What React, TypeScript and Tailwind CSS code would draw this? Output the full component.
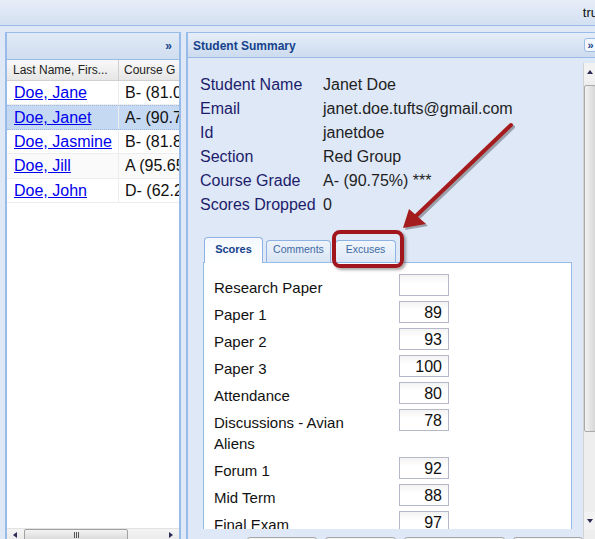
import React from "react";

const students = [
  { name: "Doe, Jane", grade: "B- (81.0", sel: false, alt: false },
  { name: "Doe, Janet", grade: "A- (90.7", sel: true, alt: false },
  { name: "Doe, Jasmine", grade: "B- (81.8", sel: false, alt: false },
  { name: "Doe, Jill", grade: "A (95.65", sel: false, alt: true },
  { name: "Doe, John", grade: "D- (62.2", sel: false, alt: false },
];

const info = [
  ["Student Name", "Janet Doe"],
  ["Email", "janet.doe.tufts@gmail.com"],
  ["Id", "janetdoe"],
  ["Section", "Red Group"],
  ["Course Grade", "A- (90.75%) ***"],
  ["Scores Dropped", "0"],
];

const scores = [
  { label: "Research Paper", value: "" },
  { label: "Paper 1", value: "89" },
  { label: "Paper 2", value: "93" },
  { label: "Paper 3", value: "100" },
  { label: "Attendance", value: "80" },
  { label: "Discussions - Avian Aliens", value: "78" },
  { label: "Forum 1", value: "92" },
  { label: "Mid Term", value: "88" },
  { label: "Final Exam", value: "97" },
];

function TriUp() {
  return <div className="w-0 h-0 border-x-[3.5px] border-x-transparent border-b-[4px] border-b-[#2b2b55]" />;
}
function TriDown() {
  return <div className="w-0 h-0 border-x-[3.5px] border-x-transparent border-t-[4px] border-t-[#2b2b55]" />;
}
function TriLeft() {
  return <div className="w-0 h-0 border-y-[3.5px] border-y-transparent border-r-[4px] border-r-[#2b2b55]" />;
}
function TriRight() {
  return <div className="w-0 h-0 border-y-[3.5px] border-y-transparent border-l-[4px] border-l-[#2b2b55]" />;
}

export default function App() {
  return (
    <div className="relative w-[595px] h-[539px] overflow-hidden bg-[#dfe8f6] font-['Liberation_Sans',Arial,sans-serif]">
      {/* top bar */}
      <div className="h-[26px] border-b border-[#99bbe8] bg-linear-to-b from-[#e7eef8] to-[#d3e0f1] flex items-center justify-end">
        <span className="text-[13px] text-[#111] mr-[-3px] whitespace-nowrap">tru</span>
      </div>

      <div className="flex gap-[5px] pl-[5px] mt-[6px]">
        {/* left panel */}
        <div className="w-[176px] h-[509px] shrink-0 flex flex-col border-x-2 border-t border-[#99bbe8] bg-white">
          <div className="h-[27px] shrink-0 flex items-center justify-end pr-[7px] bg-linear-to-b from-[#e1eaf6] to-[#d0ddef] border-b border-[#99bbe8]">
            <span className="text-[12px] font-bold text-[#15428b] leading-none">»</span>
          </div>
          <div className="h-[21px] shrink-0 flex border-b border-[#d0d0d0] bg-linear-to-b from-[#f9f9f9] to-[#e6e6e6] text-[12px] text-[#222] leading-[20px]">
            <div className="w-[112px] shrink-0 pl-[6px] border-r border-[#d0d0d0] whitespace-nowrap overflow-hidden">Last Name, Firs...</div>
            <div className="flex-1 pl-[5px] whitespace-nowrap overflow-hidden">Course G</div>
          </div>
          {students.map((s) => (
            <div
              key={s.name}
              className={
                "h-[24.4px] shrink-0 flex text-[16px] leading-[23px] " +
                (s.sel
                  ? "bg-[#c5d9f3] border-y border-dotted border-[#9fb8e0]"
                  : s.alt
                  ? "bg-[#fafafa] border-b border-[#ededed]"
                  : "bg-white border-b border-[#ededed]")
              }
            >
              <div className="w-[112px] shrink-0 pl-[7px] border-r border-[#ededed] whitespace-nowrap overflow-hidden">
                <span className="text-[#0000ee] underline">{s.name}</span>
              </div>
              <div className="flex-1 pl-[6px] whitespace-nowrap overflow-hidden text-[#111]">{s.grade}</div>
            </div>
          ))}
          <div className="flex-1" />
          <div className="h-[13px] shrink-0 flex items-center bg-linear-to-b from-[#f4f4f4] to-[#e9e9e9] border-t border-[#e2e2e2]">
            <div className="w-[16px] h-full flex items-center justify-center"><TriLeft /></div>
            <div className="ml-[1px] w-[104px] h-[12px] rounded-[2px] border border-[#a0a0a0] bg-linear-to-b from-[#f3f3f3] to-[#d9d9d9] flex items-center justify-center gap-[1px]">
              <div className="w-px h-[6px] bg-[#555]" />
              <div className="w-px h-[6px] bg-[#555]" />
              <div className="w-px h-[6px] bg-[#555]" />
            </div>
            <div className="flex-1" />
            <div className="w-[16px] h-full flex items-center justify-center"><TriRight /></div>
          </div>
        </div>

        {/* right panel */}
        <div className="w-[420px] h-[509px] shrink-0 flex flex-col border-t border-l-2 border-[#99bbe8]">
          <div className="h-[25px] shrink-0 flex items-center border-b border-[#99bbe8] bg-linear-to-b from-[#e6eef8] via-[#d9e5f4] to-[#cddbef]">
            <span className="pl-[5px] pt-[2px] text-[12px] font-bold text-[#15428b]">Student Summary</span>
            <div className="ml-auto mr-[9px] w-[13px] h-[14px] rounded-[3px] border border-[#99bbe8] bg-[#f4f8fd] flex items-center justify-center text-[11px] font-bold text-[#15428b] leading-none">
              »
            </div>
          </div>

          <div className="flex pt-[5px] h-[490px] overflow-hidden">
            {/* main content */}
            <div className="w-[395px] shrink-0 flex flex-col">
              <div className="pt-[9.5px] pl-[12px]">
                {info.map(([k, v]) => (
                  <div key={k} className="flex h-[24px] text-[16px] leading-[24px] whitespace-nowrap">
                    <div className="w-[123px] shrink-0 text-[#1c1c6c]">{k}</div>
                    <div className="text-[#1e1e1e]">{v}</div>
                  </div>
                ))}
              </div>

              <div className="mt-[20.5px] ml-[15px] w-[369px]">
                <div className="h-[26px] flex items-end pl-px border-b border-[#99bbe8]">
                  <div className="w-[59px] h-[26px] -mb-px pb-[2px] rounded-t-[4px] border-x border-t border-[#8db2e3] bg-linear-to-b from-[#f4f8fd] to-white flex items-center justify-center text-[11px] font-bold text-[#15428b]">
                    Scores
                  </div>
                  <div className="ml-[3px] w-[65px] h-[22px] pb-[3px] rounded-t-[4px] border-x border-t border-[#8db2e3] bg-linear-to-b from-[#eef3fa] to-[#d9e5f4] flex items-center justify-center text-[10.5px] text-[#416aa3]">
                    Comments
                  </div>
                  <div className="ml-[4px] w-[61px] h-[22px] pb-[3px] rounded-t-[4px] border-x border-t border-[#8db2e3] bg-linear-to-b from-[#f2f6fc] to-[#dde8f6] flex items-center justify-center text-[10.5px] text-[#416aa3]">
                    Excuses
                  </div>
                </div>
                <div className="h-[266px] overflow-hidden border-x border-[#99bbe8] bg-white pt-[11px] pl-[10px]">
                  {scores.map((s) => (
                    <div key={s.label} className="flex items-start mb-[5px]">
                      <div className="w-[160px] shrink-0 pt-[3px] -mb-[2px] text-[15px] leading-[21px] text-[#111]">{s.label}</div>
                      <div className="ml-[25px] w-[50px] h-[22px] shrink-0 border border-[#b5b8c8] bg-linear-to-b from-[#f3f3f3] to-white to-40% text-right pr-[6px] pt-px text-[16px] leading-[19px] text-[#111]">
                        {s.value}
                      </div>
                    </div>
                  ))}
                </div>
              </div>

              <div className="mt-[8px] ml-[59px] flex gap-[8px]">
                <div className="w-[72px] h-[22px] rounded-[3px] border border-[#a7a7a7] bg-[#f2f2f2]" />
                <div className="w-[72px] h-[22px] rounded-[3px] border border-[#a7a7a7] bg-[#f2f2f2]" />
                <div className="w-[103px] h-[22px] rounded-[3px] border border-[#a7a7a7] bg-[#f2f2f2]" />
                <div className="w-[72px] h-[22px] rounded-[3px] border border-[#a7a7a7] bg-[#f2f2f2]" />
              </div>
            </div>

            {/* vertical scrollbar */}
            <div className="w-[13px] h-[480px] shrink-0 flex flex-col bg-[#eeeeee] border-l border-[#d2d2d2]">
              <div className="h-[18px] shrink-0 flex items-center justify-center bg-[#f2f2f2]"><TriUp /></div>
              <div className="h-[4px] shrink-0" />
              <div className="h-[347px] shrink-0 rounded-[2px] border border-[#a9a9a9] bg-linear-to-r from-[#f2f2f2] to-[#d7d7d7]" />
              <div className="h-[80px] shrink-0" />
              <div className="h-[18px] shrink-0 flex items-center justify-center bg-[#f2f2f2]"><TriDown /></div>
            </div>
          </div>
        </div>
      </div>

      {/* callout: red box around Excuses tab */}
      <div className="absolute left-[332px] top-[230px] w-[72px] h-[38px] rounded-[8px] border-4 border-[#a0161c] shadow-[2px_2px_3px_rgba(0,0,0,0.35)]" />

      {/* callout: red arrow */}
      <svg className="absolute left-0 top-0 pointer-events-none" width="595" height="539" viewBox="0 0 595 539">
        <g opacity="0.3" transform="translate(2,2)">
          <line x1="511" y1="125" x2="416" y2="216" stroke="#000" strokeWidth="4" strokeLinecap="round" />
          <polygon points="403,228 409,209 426,224" fill="#000" />
        </g>
        <line x1="511" y1="125" x2="416" y2="216" stroke="#a51c1f" strokeWidth="4" strokeLinecap="round" />
        <polygon points="403,228 409,209 426,224" fill="#a51c1f" />
      </svg>
    </div>
  );
}
